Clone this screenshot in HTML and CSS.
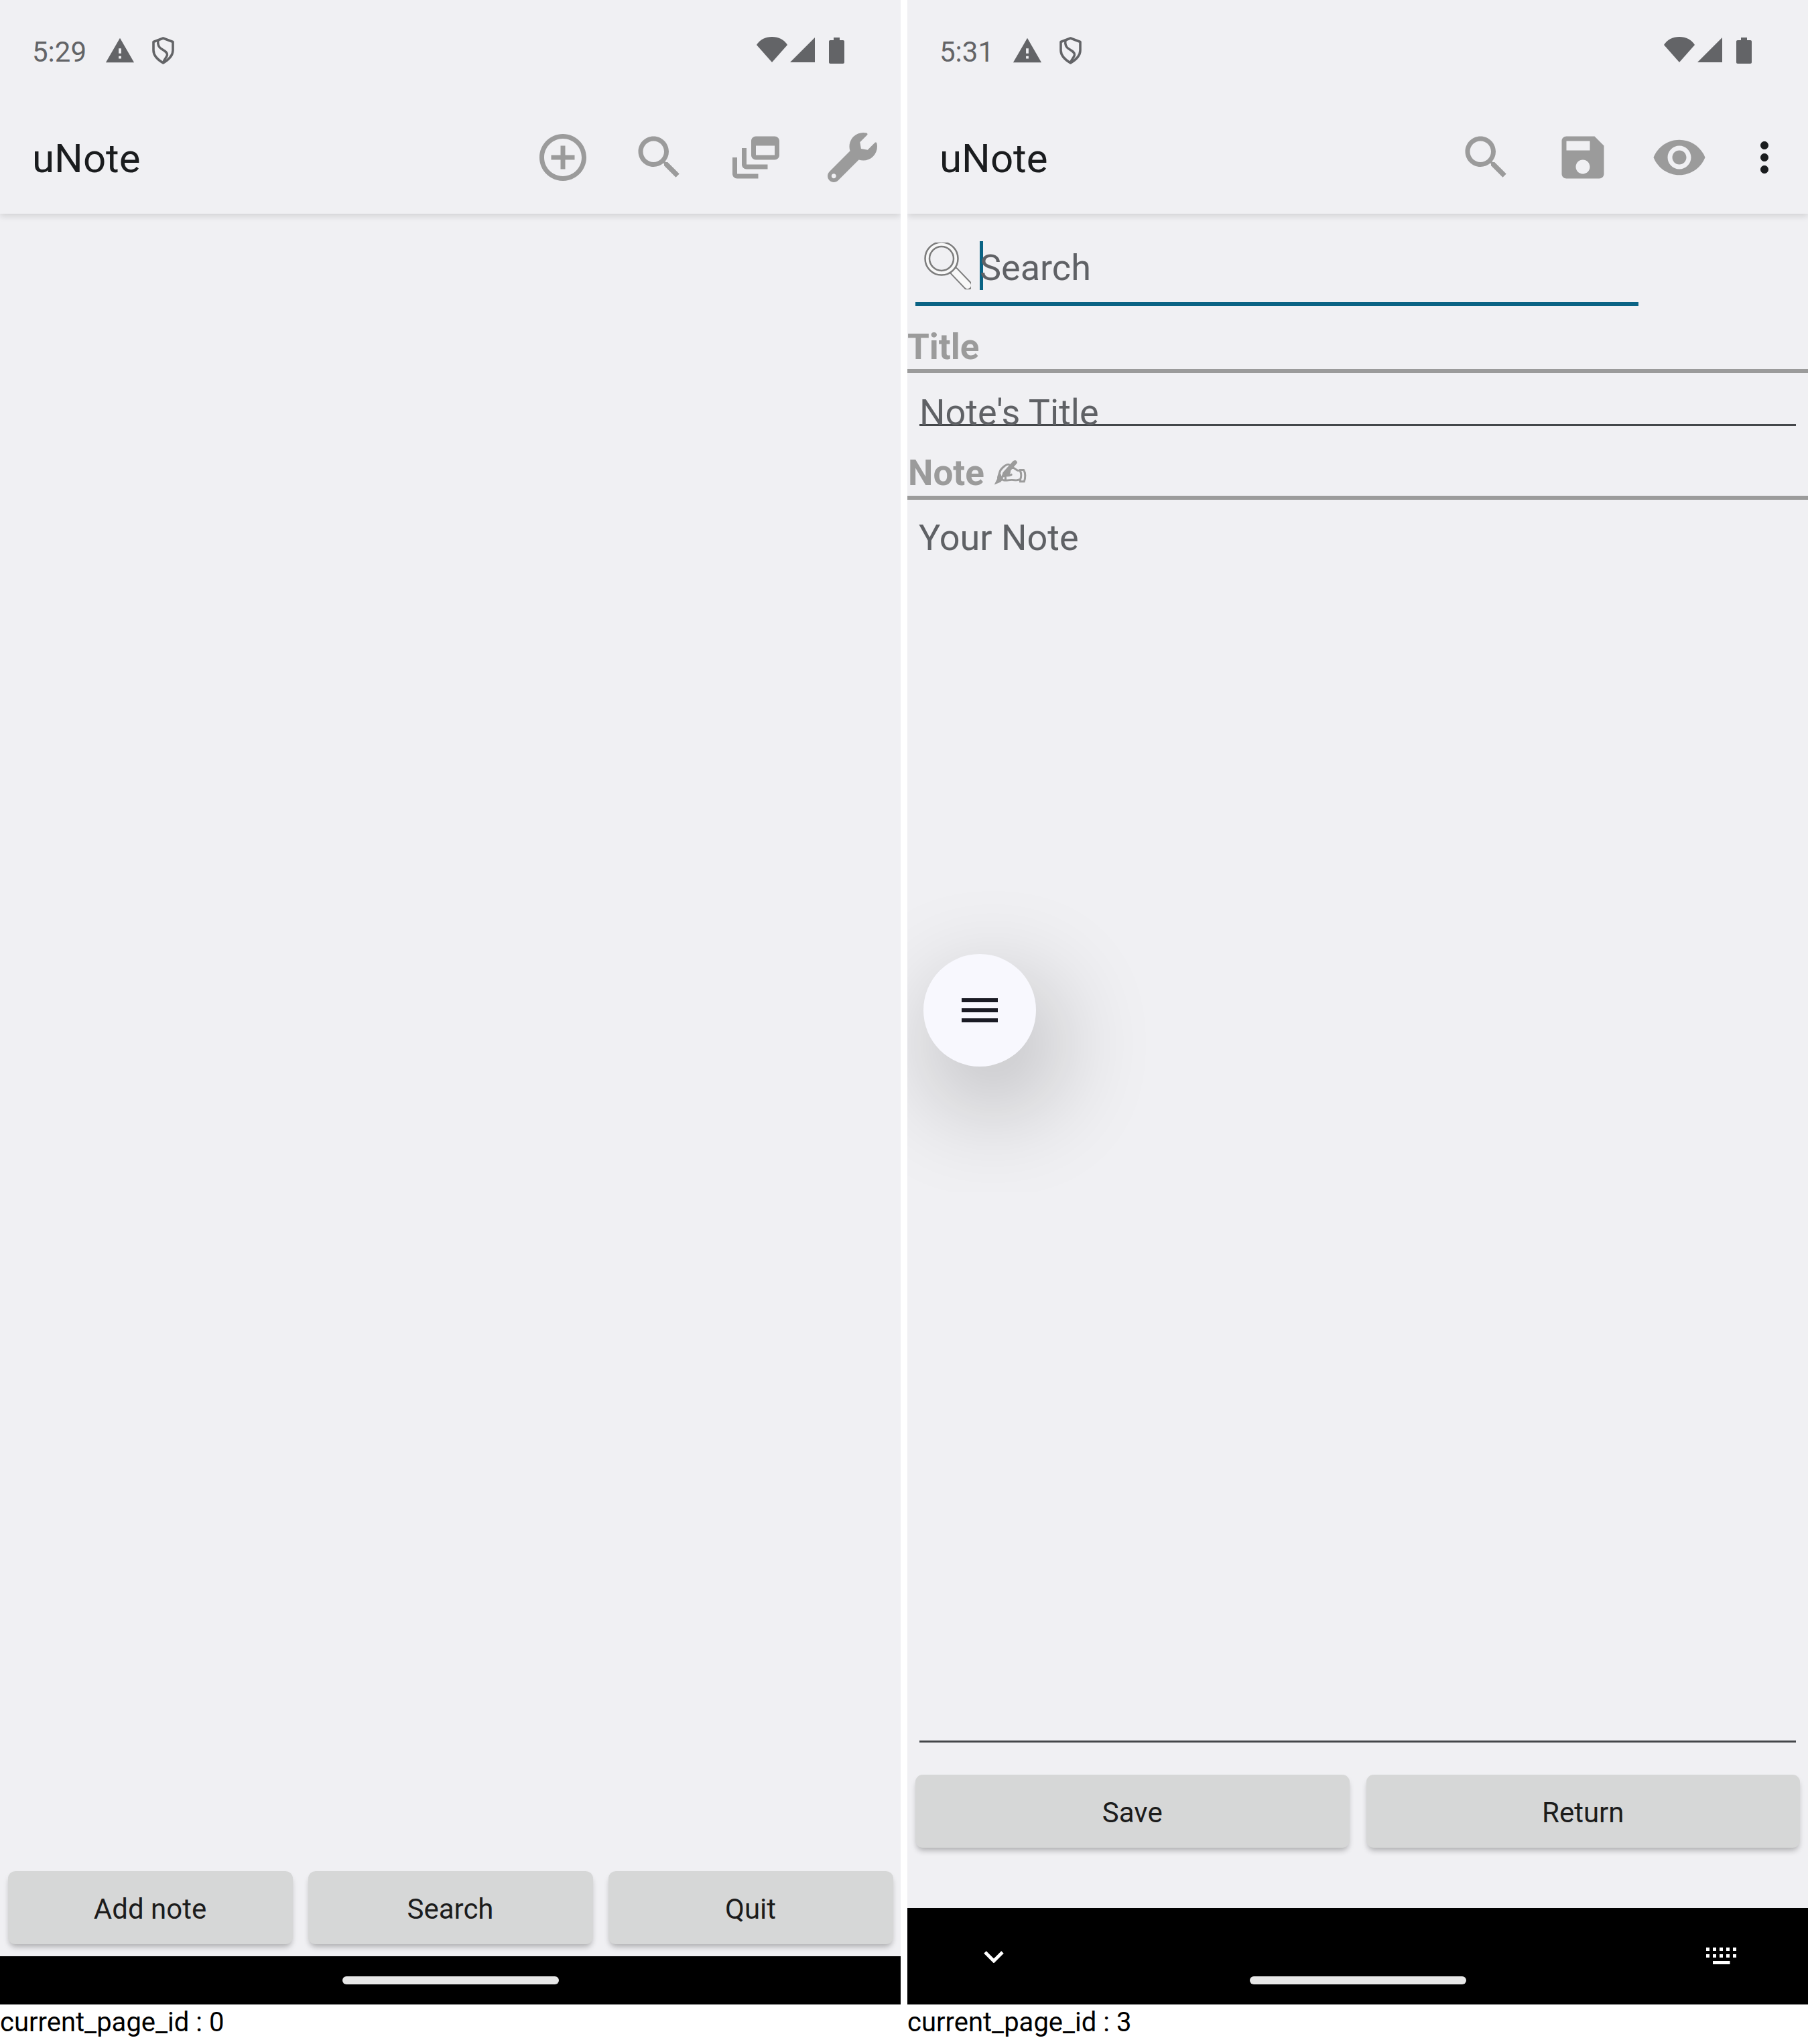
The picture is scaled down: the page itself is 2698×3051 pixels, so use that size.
FILE: index.html
```html
<!DOCTYPE html>
<html lang="en">
<head>
  <meta charset="UTF-8" />
  <meta name="viewport" content="width=device-width, initial-scale=1.0"/>
  <title>uNote</title>
  <link rel="stylesheet" href="styles.css">
</head>
<body>
  <svg class="defs" xmlns="http://www.w3.org/2000/svg">
    <symbol id="i-warning" viewBox="0 0 24 24"><path fill-rule="evenodd" d="M1 21h22L12 2 1 21zm12-3h-2v-2h2v2zm0-4h-2v-4h2v4z"/></symbol>
    <symbol id="i-shield" viewBox="0 0 33 41"><path fill="none" stroke="currentColor" stroke-width="3.6" stroke-linejoin="round" d="M16.500 2 31 7.500V20c0 8.500-6 14-14.500 19C8 34 2 28.500 2 20V7.500z"/><path fill="none" stroke="currentColor" stroke-width="3.4" d="M9 5c-1 6 0 10 5 13 5 3 9 5 8.500 9-.4 3-4 6-6 11"/></symbol>
    <symbol id="i-wifi" viewBox="0 0 46 38"><path d="M0 12C5 4 13 0 23 0s18 4 23 12L23 38z"/></symbol>
    <symbol id="i-signal" viewBox="0 0 37 37"><path d="M37 0v37H0z"/></symbol>
    <symbol id="i-battery" viewBox="0 0 23 39"><path d="M7 0h9v4h5c1.100 0 2 .9 2 2v31c0 1.100-.9 2-2 2H2c-1.100 0-2-.9-2-2V6c0-1.100.9-2 2-2h5z"/></symbol>
    <symbol id="i-search" viewBox="0 0 24 24"><path fill-rule="evenodd" d="M15.500 14h-.79l-.28-.27C15.410 12.590 16 11.110 16 9.500 16 5.910 13.090 3 9.500 3S3 5.910 3 9.500 5.910 16 9.500 16c1.610 0 3.090-.59 4.230-1.570l.27.28v.79l5 4.990L20.490 19l-4.990-5zm-6 0C7.010 14 5 11.990 5 9.500S7.010 5 9.500 5 14 7.010 14 9.500 11.990 14 9.500 14z"/></symbol>
  </svg>

  <!-- main page -->
  <section class="phone">
    <div class="screen">
      <div class="status">
        <span class="clock">5:29</span>
        <svg class="ic-warning"><use href="#i-warning"/></svg>
        <svg class="ic-shield"><use href="#i-shield"/></svg>
        <span class="status-right">
          <svg class="ic-wifi"><use href="#i-wifi"/></svg>
          <svg class="ic-signal"><use href="#i-signal"/></svg>
          <svg class="ic-battery"><use href="#i-battery"/></svg>
        </span>
      </div>
      <header class="appbar">
        <span class="app-title">uNote</span>
        <div class="actions">
          <svg class="action" viewBox="0 0 24 24"><path fill-rule="evenodd" d="M13 7h-2v4H7v2h4v4h2v-4h4v-2h-4V7zm-1-5C6.480 2 2 6.480 2 12s4.480 10 10 10 10-4.480 10-10S17.520 2 12 2zm0 18c-4.410 0-8-3.590-8-8s3.590-8 8-8 8 3.590 8 8-3.590 8-8 8z"/></svg>
          <svg class="action"><use href="#i-search"/></svg>
          <svg class="action" viewBox="0 0 24 24"><path fill-rule="evenodd" d="M8 8H6v7c0 1.100.9 2 2 2h9v-2H8V8zM20 3h-8c-1.100 0-2 .9-2 2v6c0 1.100.9 2 2 2h8c1.100 0 2-.9 2-2V5c0-1.100-.9-2-2-2zm0 8h-8V7h8v4zM4 12H2v7c0 1.100.9 2 2 2h9v-2H4v-7z"/></svg>
          <svg class="action wrench" viewBox="0 0 512 512"><path fill-rule="evenodd" d="M507.730 109.100c-2.240-9.030-13.540-12.090-20.120-5.510l-74.360 74.360-67.880-11.310-11.310-67.880 74.360-74.360c6.620-6.620 3.430-17.900-5.660-20.160-47.380-11.740-99.550.91-136.580 37.930-39.640 39.640-50.550 97.100-34.050 147.200L18.740 402.760c-24.990 24.990-24.990 65.510 0 90.500 24.990 24.990 65.510 24.990 90.500 0l213.210-213.210c50.120 16.710 107.470 5.680 147.370-34.220 37.070-37.070 49.700-89.320 37.910-136.730zM64 472c-13.250 0-24-10.750-24-24 0-13.260 10.750-24 24-24s24 10.740 24 24c0 13.250-10.750 24-24 24z"/></svg>
        </div>
      </header>
      <main class="content"></main>
      <div class="buttons three">
        <button class="btn">Add note</button>
        <button class="btn">Search</button>
        <button class="btn">Quit</button>
      </div>
      <div class="navbar">
        <span class="pill"></span>
      </div>
    </div>
    <p class="page-id">current_page_id : 0</p>
  </section>

  <!-- edit page -->
  <section class="phone">
    <div class="screen">
      <div class="status">
        <span class="clock">5:31</span>
        <svg class="ic-warning"><use href="#i-warning"/></svg>
        <svg class="ic-shield"><use href="#i-shield"/></svg>
        <span class="status-right">
          <svg class="ic-wifi"><use href="#i-wifi"/></svg>
          <svg class="ic-signal"><use href="#i-signal"/></svg>
          <svg class="ic-battery"><use href="#i-battery"/></svg>
        </span>
      </div>
      <header class="appbar">
        <span class="app-title">uNote</span>
        <div class="actions">
          <svg class="action"><use href="#i-search"/></svg>
          <svg class="action" viewBox="0 0 24 24"><path fill-rule="evenodd" d="M17 3H5c-1.110 0-2 .9-2 2v14c0 1.100.89 2 2 2h14c1.100 0 2-.9 2-2V7l-4-4zm-5 16c-1.660 0-3-1.340-3-3s1.340-3 3-3 3 1.340 3 3-1.340 3-3 3zm3-10H5V5h10v4z"/></svg>
          <svg class="action" viewBox="0 0 24 24"><path fill-rule="evenodd" d="M12 4.500C7 4.500 2.730 7.610 1 12c1.730 4.390 6 7.500 11 7.500s9.270-3.110 11-7.500c-1.730-4.390-6-7.500-11-7.500zM12 17c-2.760 0-5-2.240-5-5s2.240-5 5-5 5 2.240 5 5-2.240 5-5 5zm0-8c-1.660 0-3 1.340-3 3s1.340 3 3 3 3-1.340 3-3-1.340-3-3-3z"/></svg>
          <svg class="action more" viewBox="0 0 24 24"><path d="M12 8c1.100 0 2-.9 2-2s-.9-2-2-2-2 .9-2 2 .9 2 2 2zm0 2c-1.100 0-2 .9-2 2s.9 2 2 2 2-.9 2-2-.9-2-2-2zm0 6c-1.100 0-2 .9-2 2s.9 2 2 2 2-.9 2-2-.9-2-2-2z"/></svg>
        </div>
      </header>
      <main class="content editor">
        <div class="search-field">
          <svg class="glass" viewBox="0 0 70 70">
            <path class="glass-handle" d="M45 43 65 64"/>
            <path class="glass-handle-fill" d="M45 43 65 64"/>
            <circle class="glass-ring" cx="26" cy="24" r="24.500"/>
            <circle class="glass-inner" cx="26" cy="24" r="18"/>
          </svg>
          <span class="caret"></span>
          <span class="search-hint">Search</span>
        </div>
        <h2 class="section-head">Title</h2>
        <div class="title-input">Note's Title</div>
        <h2 class="section-head note-head">Note <span class="hand">✍</span></h2>
        <div class="note-input">Your Note</div>
        <button class="fab" aria-label="menu"><span></span><span></span><span></span></button>
      </main>
      <div class="buttons two">
        <button class="btn">Save</button>
        <button class="btn">Return</button>
      </div>
      <div class="navbar tall">
        <svg class="nav-chevron" viewBox="0 0 30 18"><path d="M2 2 15 15 28 2"/></svg>
        <svg class="nav-keyboard" viewBox="0 0 45 25"><path d="M0 0h5v5H0zM10 0h5v5h-5zM20 0h5v5h-5zM30 0h5v5h-5zM40 0h5v5h-5zM0 10h5v5H0zM10 10h5v5h-5zM20 10h5v5h-5zM30 10h5v5h-5zM40 10h5v5h-5zM10 20h25.500v5H10z"/></svg>
        <span class="pill"></span>
      </div>
    </div>
    <p class="page-id">current_page_id : 3</p>
  </section>
</body>
</html>
```

FILE: styles.css
```css
* {
  box-sizing: border-box;
}
html, body {
  margin: 0;
  padding: 0;
  background: #fff;
}
body {
  display: flex;
  gap: 10px;
  width: 2698px;
  height: 3051px;
  overflow: hidden;
  font-family: Roboto, sans-serif;
}
.defs {
  display: none;
}
.phone {
  width: 1344px;
  flex: none;
}
.screen {
  height: 2992px;
  background: #f0f0f3;
  display: flex;
  flex-direction: column;
  overflow: hidden;
}
.page-id {
  margin: 0;
  font-size: 40px;
  line-height: 48px;
  padding-top: 3px;
  color: #000;
}

/* status bar */
.status {
  height: 150px;
  flex: none;
  display: flex;
  align-items: flex-start;
  padding-left: 48px;
  color: #636467;
  fill: #636467;
}
.clock {
  font-size: 42px;
  line-height: 50px;
  margin-top: 53px;
  width: 108px;
}
.status svg {
  display: block;
}
.ic-warning {
  width: 46px;
  height: 46px;
  margin-top: 53px;
}
.ic-shield {
  width: 33px;
  height: 41px;
  margin: 55px 0 0 25px;
}
.status-right {
  margin-left: auto;
  margin-top: 55px;
  margin-right: 84px;
  display: flex;
}
.ic-wifi {
  width: 46px;
  height: 38px;
}
.ic-signal {
  width: 37px;
  height: 37px;
  margin: 1px 0 0 4px;
}
.ic-battery {
  width: 23px;
  height: 39px;
  margin: 1px 0 0 21px;
}

/* app bar */
.appbar {
  height: 169px;
  flex: none;
  display: flex;
  align-items: flex-start;
  padding-left: 48px;
  background: #f0f0f3;
  box-shadow: 0 3px 10px rgba(0, 0, 0, 0.14);
  clip-path: inset(0 0 -24px 0);
  position: relative;
  z-index: 2;
}
.app-title {
  font-size: 60px;
  line-height: 70px;
  margin-top: 52px;
  color: #1a1c1e;
}
.actions {
  margin-left: auto;
  margin-top: 43px;
  padding-right: 30px;
  display: flex;
  gap: 60px;
}
.action {
  width: 84px;
  height: 84px;
  fill: #9b9b9b;
  display: block;
}
.wrench {
  width: 74px;
  height: 74px;
  margin: 5px 5px 0;
}
.more {
  width: 72px;
  height: 72px;
  margin: 6px -1px 0 -11px;
  fill: #1a1c1e;
}

/* page content */
.content {
  flex: 1;
  position: relative;
}
.editor {
  display: flex;
  flex-direction: column;
  min-height: 0;
}
.search-field {
  width: 1079px;
  height: 97px;
  margin: 41px 0 0 12px;
  flex: none;
  border-bottom: 6px solid #0a6384;
  display: flex;
  align-items: flex-start;
  padding-left: 13px;
}
.glass {
  width: 70px;
  height: 70px;
  margin-top: 2px;
  flex: none;
}
.glass-ring {
  fill: #f8f8f8;
  stroke: #7c7c7c;
  stroke-width: 2.500;
}
.glass-inner {
  fill: #f0f0f3;
  stroke: #7c7c7c;
  stroke-width: 2.500;
}
.glass-handle,
.glass-handle-fill {
  fill: none;
  stroke-linecap: round;
}
.glass-handle {
  stroke: #7c7c7c;
  stroke-width: 14;
}
.glass-handle-fill {
  stroke: #f8f8f8;
  stroke-width: 10;
}
.caret {
  width: 5px;
  height: 73px;
  background: #0a6384;
  margin-left: 13px;
  flex: none;
}
.search-hint {
  font-size: 54px;
  line-height: 64px;
  margin: 8px 0 0 -5px;
  color: #5f6165;
}
.section-head {
  margin: 0;
  flex: none;
  height: 100px;
  padding-top: 30px;
  font-size: 53px;
  line-height: 62px;
  font-weight: 700;
  color: #9b9b9b;
  border-bottom: 6px solid #9b9b9b;
}
.note-head {
  height: 110px;
  padding: 39px 0 0 1px;
}
.hand {
  font-family: "DejaVu Sans", sans-serif;
  font-size: 58px;
  line-height: 0;
  margin-left: 2px;
  vertical-align: -3px;
  -webkit-text-stroke: 1.5px #9b9b9b;
}
.title-input {
  flex: none;
  height: 79px;
  margin: 0 18px;
  padding-top: 32px;
  font-size: 54px;
  line-height: 54px;
  color: #5f6165;
  border-bottom: 3px solid #44474a;
}
.note-input {
  flex: 1;
  margin: 0 18px 48px;
  padding: 25px 0 0;
  font-size: 54px;
  line-height: 64px;
  text-indent: -1px;
  color: #5f6165;
  border-bottom: 3px solid #44474a;
}
.fab {
  position: absolute;
  left: 24px;
  top: 1105px;
  width: 168px;
  height: 168px;
  border: none;
  border-radius: 50%;
  padding: 0;
  background: #f8f8fe;
  box-shadow: 20px 50px 150px 10px rgba(0, 0, 0, 0.24);
  display: flex;
  flex-direction: column;
  align-items: center;
  justify-content: center;
  gap: 9px;
}
.fab span {
  width: 54px;
  height: 6px;
  background: #1a1b24;
}

/* bottom buttons */
.buttons {
  flex: none;
  display: grid;
}
.buttons.three {
  grid-template-columns: repeat(3, 1fr);
  gap: 23px;
  padding: 0 11.500px 18px;
}
.buttons.two {
  grid-template-columns: repeat(2, 1fr);
  gap: 25px;
  padding: 0 12px 90px;
}
.btn {
  height: 109px;
  border: none;
  border-radius: 11px;
  background: #d6d7d7;
  color: #1c1c1c;
  font-family: Roboto, sans-serif;
  font-size: 42px;
  padding: 3px 0 0;
  box-shadow: 0 6px 8px -2px rgba(0, 0, 0, 0.28);
}

/* nav bar */
.navbar {
  flex: none;
  height: 72px;
  background: #000;
  display: flex;
  justify-content: center;
  align-items: flex-start;
  padding-top: 30px;
  position: relative;
}
.navbar.tall {
  height: 144px;
  padding-top: 102px;
}
.pill {
  width: 323px;
  height: 12px;
  border-radius: 6px;
  background: #e8e8e8;
}
.nav-chevron {
  position: absolute;
  left: 114px;
  top: 64px;
  width: 30px;
  height: 18px;
  fill: none;
  stroke: #fff;
  stroke-width: 5;
}
.nav-keyboard {
  position: absolute;
  right: 107px;
  top: 59px;
  width: 45px;
  height: 25px;
  fill: #fff;
}
```
